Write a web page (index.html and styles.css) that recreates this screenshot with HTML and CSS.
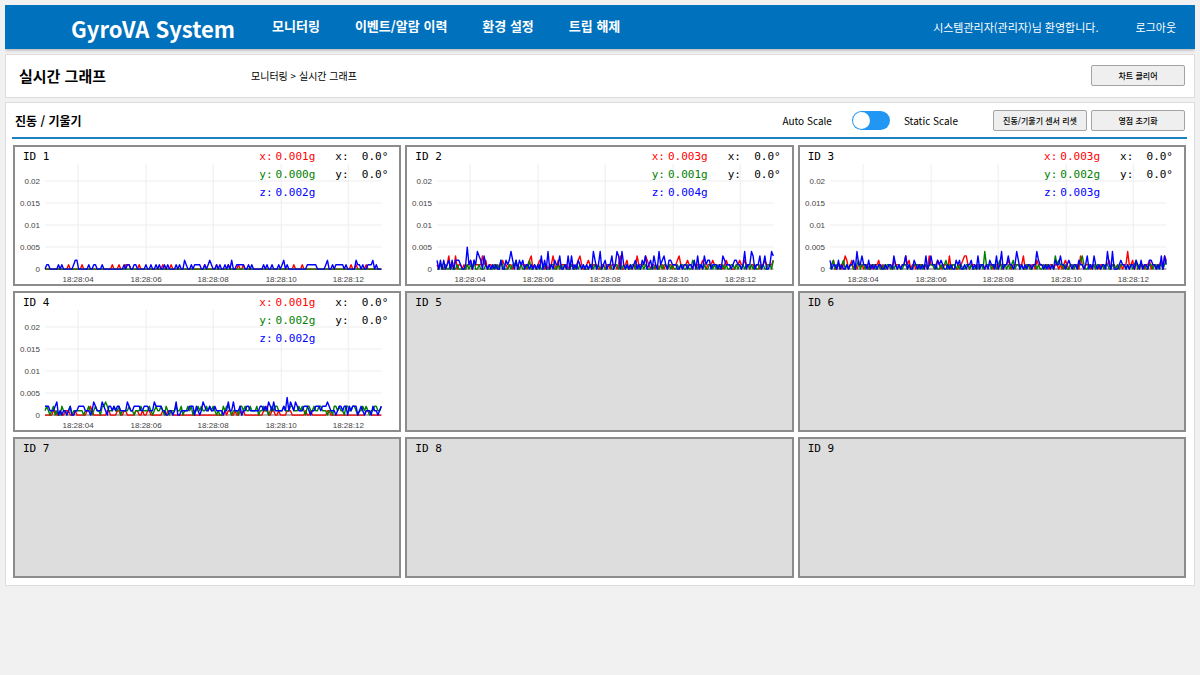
FILE: index.html
```html
<!DOCTYPE html>
<html lang="ko">
<head>
  <meta charset="UTF-8">
  <meta name="viewport" content="width=device-width, initial-scale=1.0">
  <title>GyroVA System</title>
  <link rel="stylesheet" href="styles.css">
</head>
<body>

  <header class="top-bar">
    <h1 class="logo">GyroVA System</h1>
    <nav class="menu">
      <a href="#">모니터링</a>
      <a href="#">이벤트/알람 이력</a>
      <a href="#">환경 설정</a>
      <a href="#">트립 해제</a>
    </nav>
    <div class="user">
      <span>시스템관리자(관리자)님 환영합니다.</span>
      <a href="#">로그아웃</a>
    </div>
  </header>

  <section class="title-bar">
    <h2>실시간 그래프</h2>
    <span class="path">모니터링 &gt; 실시간 그래프</span>
    <button type="button">차트 클리어</button>
  </section>

  <main class="panel">
    <div class="panel-head">
      <h3>진동 / 기울기</h3>
      <div class="scale">
        <label for="scaleMode">Auto Scale</label>
        <input type="checkbox" id="scaleMode" class="switch">
        <label for="scaleMode">Static Scale</label>
      </div>
      <div class="actions">
        <button type="button">진동/기울기 센서 리셋</button>
        <button type="button">영점 초기화</button>
      </div>
    </div>
    <div class="sensors" id="sensors"></div>
  </main>

  <script src="chart.js"></script>
</body>
</html>
```
FILE: styles.css
```css
* {
  box-sizing: border-box;
}

body {
  margin: 5px;
  background-color: #f1f1f1;
  color: #000;
  font-family: 'Noto Sans CJK KR', sans-serif;
  font-size: 10px;
}

h1, h2, h3 {
  margin: 0;
}

a {
  color: inherit;
  text-decoration: none;
}

button {
  width: 94px;
  height: 21px;
  padding: 0;
  border: 1px solid #a3a3a3;
  border-radius: 2px;
  background-color: #efefef;
  color: #000;
  font-family: inherit;
  font-size: 8px;
  font-weight: 500;
}

/* header */
.top-bar {
  display: flex;
  align-items: center;
  height: 44px;
  padding: 0 19px 0 66px;
  background-color: #0071bd;
  color: #fff;
  box-shadow: 0 1px 3px rgba(0, 0, 0, 0.3);
}

.logo {
  padding-top: 2px;
  font-size: 22px;
  line-height: 42px;
}

.menu {
  display: flex;
  gap: 35px;
  margin-left: 37px;
  padding-bottom: 3px;
  font-size: 13px;
  font-weight: 700;
}

.user {
  display: flex;
  gap: 37px;
  margin-left: auto;
  font-size: 11px;
}

.title-bar {
  display: flex;
  align-items: center;
  height: 44px;
  margin-top: 5px;
  padding: 0 9px 1px 13px;
  border: 1px solid #ddd;
  background-color: #fff;
}

.title-bar h2 {
  width: 232px;
  font-size: 15px;
}

.title-bar button {
  margin-left: auto;
}

/* sensor panel */
.panel {
  margin-top: 4px;
  padding: 0 8px 7px 7px;
  border: 1px solid #ddd;
  background-color: #fff;
}

.panel-head {
  display: flex;
  align-items: center;
  height: 36px;
  margin: 0 -1px 6px;
  padding: 1px 2px 0 3px;
  border-bottom: 2px solid #1b80c4;
}

.panel-head h3 {
  font-size: 12px;
}

.scale {
  display: flex;
  align-items: center;
  gap: 14px;
  margin-left: auto;
  margin-right: 35px;
}

.switch {
  appearance: none;
  display: flex;
  align-items: center;
  width: 38px;
  height: 19px;
  margin: 0 0 0 6px;
  padding: 0 1px;
  border-radius: 10px;
  background-color: #2196f3;
}

.switch::before {
  content: '';
  width: 17px;
  height: 17px;
  border-radius: 50%;
  background-color: #fff;
}

.switch:checked {
  justify-content: flex-end;
}

.actions {
  display: flex;
  gap: 4px;
}

.sensors {
  display: grid;
  grid-template-columns: repeat(3, 1fr);
  grid-auto-rows: 1fr;
  gap: 5px 4px;
}

.sensor {
  position: relative;
  border: 2px solid #8c8c8c;
  background-color: #fff;
  font-family: 'DejaVu Sans Mono', monospace;
  font-size: 11px;
}

.sensor.off {
  background-color: #ddd;
}

.sensor-text {
  position: absolute;
  top: 0;
  left: 0;
  right: 0;
  display: flex;
  padding: 1px 11px 0 8px;
  line-height: 18px;
  white-space: pre;
}

.accel {
  margin-left: auto;
}

.accel div {
  display: flex;
  gap: 3px;
}

.tilt {
  margin-left: 20px;
}

.x { color: #f00; }
.y { color: #008000; }
.z { color: #00f; }

.chart {
  display: block;
  width: 100%;
}

.chart .grid {
  stroke: #eee;
}

.chart .zero {
  stroke: #666;
}

.chart text {
  fill: #444;
  font-family: 'Liberation Sans', sans-serif;
  font-size: 8px;
}

.chart polyline {
  fill: none;
  stroke: currentColor;
  stroke-width: 1.4;
  stroke-linejoin: round;
}
```
FILE: chart.js
```javascript
// samples in 0.001g, one digit each, 20 per second
const sensors = [
  {
    accel: ['0.001g', '0.000g', '0.002g'],
    x: '00000000000000100000 00100000000000000000 10001000111000001000 00000000001000010000 00000000000000010000 00100000010000010010 00000000000000000000 00000000100001000000 00000000000000000000 001001000001000000000',
    y: '00000000000000000000 00000000000000000000 00000000000000000000 00000000000000000000 00000000000000000000 00000000000000000000 00000000000000000000 00000000000000000000 00000000000000000000 000000000000000000000',
    z: '01100000101000000122 00000010011000100000 00000001011001100000 10010010100101000010 10021001011110010121 00101001010200111110 01010000001010010001 01201000000000001111 11000001200101111101 000002110100111201000'
  },
  {
    accel: ['0.003g', '0.001g', '0.004g'],
    x: '10110013010301101011 20111113120110110112 11011011101110123010 12210101131020111101 11012310012101110011 01101110130012010103 11113210110101101011 01123101121101110121 01112110110121100011 211211011011011211112',
    y: '00100100100010000010 10200100010000101021 00010112001001020010 01001000110010101000 10010101000110101001 00110011010101001101 00101000101001011010 10010110010021101101 00110101001010011010 101011010100101001102',
    z: '20202012020222100151 20214320310101010020 02124202021201101010 10302040102113001030 30102101010104201401 20113014304101010120 10213012031041231022 11100101101102030103 12201110103211101221 101401143011301300143'
  },
  {
    accel: ['0.003g', '0.002g', '0.003g'],
    x: '11200110132012010111 01101011120101011021 11011312011011110103 11112101110301100112 33101110111101111011 01101121011111130110 11021110110110110101 21011011031011101101 01101120110101011411 201101101120110112032',
    y: '01201101201011001201 10100110010010110101 01001101001110101101 11010010120101101010 01101001011041110110 12011010120110100110 01101001011010312110 10011010123100110101 10101100110101110101 012011010011011011012',
    z: '20110201001011204113 11020101011001011031 01011301002101010301 31102121001010021200 10112010301101021103 01401131101420101011 01142110101010211311 01210110211013010310 10110410400012110101 102102011022110103031'
  },
  {
    accel: ['0.001g', '0.002g', '0.002g'],
    x: '00000110010011100010 00000112100000000110 00011001100000110010 01100000001101110000 00000000000000000000 00000001011001001010 00000000001120011001 00001110000000010010 00000000110000000000 000000000001110000000',
    y: '12101201002110120111 11101121012110223211 12112011112110111211 11210121121021011121 12011212011212112121 21010021221011102212 11211120112110121221 11211122111212102211 21122111011022121102 211221011212101122112',
    z: '22211123010110120011 22221110132111321022 12122111132112222112 22111322221100110130 01111122202101321121 12111101131131112011 22111111221213213111 11214132132111222101 12221222321110122122 021222012101110211012'
  }
];

const tickY = ['0', '0.005', '0.01', '0.015', '0.02'];
const tickX = ['18:28:04', '18:28:06', '18:28:08', '18:28:10', '18:28:12'];
const left = 30, right = 366, top_ = 17, bottom = 122;

function line(data, name) {
  const samples = data.replace(/ /g, '');
  const step = (right - left) / (samples.length - 1);
  const points = [...samples].map((v, i) =>
    `${(left + i * step).toFixed(1)},${(bottom - v * 4.4).toFixed(1)}`);
  return `<polyline class="${name}" points="${points.join(' ')}"/>`;
}

function chart(s) {
  let svg = '<svg class="chart" viewBox="0 0 384 137">';
  tickY.forEach((t, i) => {
    const y = bottom - i * 22;
    svg += `<line class="grid" x1="${left}" x2="${right}" y1="${y}" y2="${y}"/>`;
    svg += `<text x="25" y="${y + 3}" text-anchor="end">${t}</text>`;
  });
  tickX.forEach((t, i) => {
    const x = 63 + Math.round(i * 67.6);
    svg += `<line class="grid" x1="${x}" x2="${x}" y1="${top_}" y2="${bottom}"/>`;
    svg += `<text x="${x}" y="135" text-anchor="middle">${t}</text>`;
  });
  svg += `<line class="zero" x1="${left}" x2="${right}" y1="${bottom}" y2="${bottom}"/>`;
  return svg + line(s.x, 'x') + line(s.y, 'y') + line(s.z, 'z') + '</svg>';
}

let html = '';
for (let id = 1; id <= 9; id++) {
  const s = sensors[id - 1];
  if (!s) {
    html += `<div class="sensor off"><div class="sensor-text">ID ${id}</div></div>`;
    continue;
  }
  const accel = ['x', 'y', 'z'].map((k, i) =>
    `<div class="${k}"><span>${k}:</span><span>${s.accel[i]}</span></div>`).join('');
  html += `<div class="sensor">${chart(s)}
    <div class="sensor-text"><span>ID ${id}</span><div class="accel">${accel}</div><div class="tilt"><div>x:  0.0°</div><div>y:  0.0°</div></div></div>
  </div>`;
}
document.getElementById('sensors').innerHTML = html;
```
